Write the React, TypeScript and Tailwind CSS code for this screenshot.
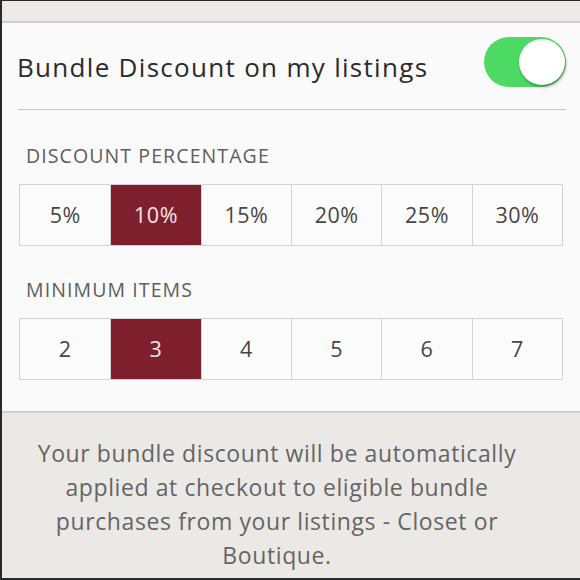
import { useState } from "react";

const percents = ["5%", "10%", "15%", "20%", "25%", "30%"];
const items = ["2", "3", "4", "5", "6", "7"];

const Segmented = ({
  options,
  value,
  onChange,
}: {
  options: string[];
  value: string;
  onChange: (v: string) => void;
}) => (
  <div className="mx-[17px] grid h-[62px] grid-cols-6 border border-[#d4d2d3] bg-[#fcfbfc]">
    {options.map((o, i) => (
      <button
        key={o}
        onClick={() => onChange(o)}
        className={`flex items-center justify-center text-[21.5px] tracking-[0.5px] ${
          i > 0 ? "border-l border-[#d4d2d3]" : ""
        } ${value === o ? "bg-[#7f1f2e] text-[#f3e6e8]" : "text-[#464646]"}`}
      >
        {o}
      </button>
    ))}
  </div>
);

export default function App() {
  const [on, setOn] = useState(true);
  const [pct, setPct] = useState("10%");
  const [min, setMin] = useState("3");

  return (
    <div
      className="flex h-[580px] w-[580px] flex-col border-t border-b-2 border-l-2 border-[#2a2a2a] bg-[#fbfafb]"
      style={{ fontFamily: "'Open Sans', Lato, sans-serif" }}
    >
      <div className="h-[22px] border-b-2 border-[#cfcdca] bg-[#edebe8]" />

      <div className="relative flex h-[86px] items-center pl-[15px] pr-[14px] pt-[2px]">
        <span className="text-[26px] tracking-[1.3px] text-[#2b2b2b]">Bundle Discount on my listings</span>
        <button
          onClick={() => setOn(!on)}
          className={`absolute right-[14px] top-[14px] h-[50px] w-[82px] rounded-full ${
            on ? "bg-[#4cd964]" : "bg-[#e5e5e5]"
          }`}
        >
          <span
            className={`absolute top-[2px] h-[46px] w-[46px] rounded-full bg-white shadow-[1px_2px_3px_rgba(0,0,0,0.35)] ${
              on ? "right-[1px]" : "left-[1px]"
            }`}
          />
        </button>
      </div>

      <div className="ml-[16px] mr-[14px] h-px bg-[#c6c4c5]" />

      <div className="mb-[16px] mt-[34px] px-[24px] text-[19.5px] leading-[24px] tracking-[1.1px] text-[#5e5e5e]">
        DISCOUNT PERCENTAGE
      </div>
      <Segmented options={percents} value={pct} onChange={setPct} />

      <div className="mb-[16px] mt-[32px] px-[24px] text-[19.5px] leading-[24px] tracking-[1.1px] text-[#5e5e5e]">
        MINIMUM ITEMS
      </div>
      <Segmented options={items} value={min} onChange={setMin} />

      <div className="mt-[31px] flex flex-1 items-start justify-center border-t-2 border-[#cfcdca] bg-[#ebe9e6] pl-[20px] pr-[48px] pt-[23px]">
        <p className="text-center text-[23px] leading-[34px] tracking-[0.6px] text-[#666464]">
          Your bundle discount will be automatically applied at checkout to eligible bundle purchases from your
          listings - Closet or Boutique.
        </p>
      </div>
    </div>
  );
}
